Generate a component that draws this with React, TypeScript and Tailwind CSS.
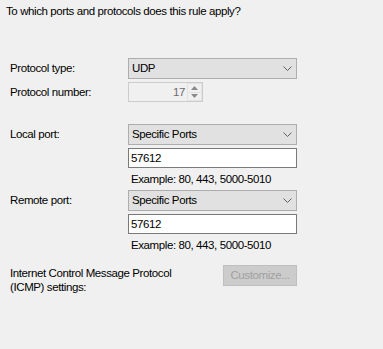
import React from "react";

const Chevron = () => (
  <svg width="9" height="5" viewBox="0 0 9 5" className="shrink-0">
    <polyline points="0.5,0.5 4.5,4.5 8.5,0.5" fill="none" stroke="#606060" strokeWidth="1" />
  </svg>
);

const Combo = ({ value }: { value: string }) => (
  <div className="h-[21px] w-[169px] border border-[#adadad] bg-[#e1e1e1] flex items-center justify-between pl-[3px] pr-[4px]">
    <span>{value}</span>
    <Chevron />
  </div>
);

const TextBox = ({ value }: { value: string }) => (
  <div className="h-[20px] w-[169px] border border-[#7a7a7a] bg-white flex items-center pl-[2px]">
    {value}
  </div>
);

const Spin = () => (
  <div className="h-[20px] w-[75px] border border-[#cccccc] flex">
    <div className="flex-1 flex items-center justify-end pr-[2px] text-[#6d6d6d]">17</div>
    <div className="w-[15px] flex flex-col">
      <div className="flex-1 border border-[#e3e3e3] flex items-center justify-center">
        <svg width="7" height="4" viewBox="0 0 7 4">
          <polygon points="0,4 3.5,0 7,4" fill="#8a8a8a" />
        </svg>
      </div>
      <div className="flex-1 border border-t-0 border-[#e3e3e3] flex items-center justify-center">
        <svg width="7" height="4" viewBox="0 0 7 4">
          <polygon points="0,0 3.5,4 7,0" fill="#8a8a8a" />
        </svg>
      </div>
    </div>
  </div>
);

export default function App() {
  return (
    <div className="w-[383px] h-[349px] bg-[#f0f0f0] text-black text-[11.5px] tracking-[-0.4px] leading-[15px] font-['Liberation_Sans',Arial,sans-serif]">
      <div className="pt-[4px] pl-[6px]">To which ports and protocols does this rule apply?</div>

      <div className="pl-[10px]">
        <div className="mt-[39px] grid grid-cols-[118px_169px] items-center gap-y-[3px]">
          <div>Protocol type:</div>
          <Combo value="UDP" />
          <div>Protocol number:</div>
          <Spin />
        </div>

        <div className="mt-[22px] grid grid-cols-[118px_169px] items-center gap-y-[3px]">
          <div>Local port:</div>
          <Combo value="Specific Ports" />
          <div />
          <TextBox value="57612" />
          <div />
          <div className="h-[16px] pl-[3px] flex items-center">Example: 80, 443, 5000-5010</div>
          <div>Remote port:</div>
          <Combo value="Specific Ports" />
          <div />
          <TextBox value="57612" />
          <div />
          <div className="h-[16px] pl-[3px] flex items-center">Example: 80, 443, 5000-5010</div>
        </div>

        <div className="mt-[12px] flex items-start w-[287px] justify-between">
          <div className="pt-[1px] leading-[14px]">
            <div>Internet Control Message Protocol</div>
            <div>(ICMP) settings:</div>
          </div>
          <div className="h-[21px] w-[74px] border border-[#bfbfbf] bg-[#cccccc] text-[#a0a0a0] flex items-center justify-center">
            Customize...
          </div>
        </div>
      </div>
    </div>
  );
}
